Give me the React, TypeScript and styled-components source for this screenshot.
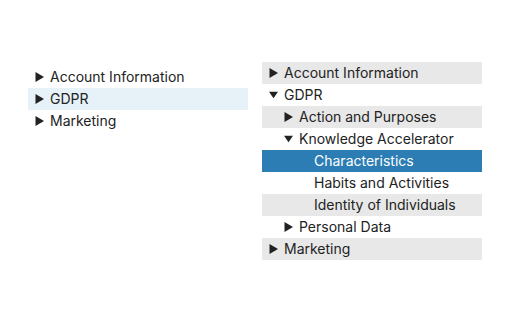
import React from 'react';
import styled, { createGlobalStyle } from 'styled-components';

const GlobalStyle = createGlobalStyle`
  body {
    margin: 0;
    background: #ffffff;
    font-family: Inter, "Noto Sans", sans-serif;
  }
`;

const Page = styled.div`
  display: flex;
  align-items: flex-start;
  gap: 14px;
  padding: 62px 0 0 28px;
  width: 520px;
  height: 320px;
  box-sizing: border-box;
`;

const Tree = styled.ul<{ $offset?: number }>`
  list-style: none;
  margin: ${(p) => p.$offset || 0}px 0 0;
  padding: 0;
  width: 220px;
`;

const rowBackground = (state?: string, stripe?: boolean) => {
  if (state === 'selected') return '#2b7db4';
  if (state === 'hover') return '#e6f1f8';
  return stripe ? '#e8e8e8' : 'transparent';
};

const Row = styled.li<{ $level: number; $state?: 'hover' | 'selected'; $stripe?: boolean }>`
  display: flex;
  align-items: center;
  height: 22px;
  padding-left: ${(p) => 7 + p.$level * 15}px;
  padding-bottom: 1px;
  box-sizing: border-box;
  font-size: 14px;
  color: ${(p) => (p.$state === 'selected' ? '#ffffff' : '#222222')};
  background: ${(p) => rowBackground(p.$state, p.$stripe)};
  white-space: nowrap;
`;

const Toggle = styled.span`
  display: inline-flex;
  align-items: center;
  justify-content: center;
  width: 9px;
  margin-right: 6px;
`;

const Spacer = styled.span`
  display: inline-block;
  width: 15px;
`;

type Node = {
  label: string;
  level: number;
  open?: boolean;
  leaf?: boolean;
  state?: 'hover' | 'selected';
};

const Arrow = ({ open }: { open?: boolean }) => (
  <Toggle>
    {open ? (
      <svg width="10" height="8" viewBox="0 0 10 8">
        <path d="M0 0.5 L10 0.5 L5 7.5 Z" fill="#222" />
      </svg>
    ) : (
      <svg width="9" height="10" viewBox="0 0 9 10">
        <path d="M0.5 0 L9 5 L0.5 10 Z" fill="#222" />
      </svg>
    )}
  </Toggle>
);

const left: Node[] = [
  { label: 'Account Information', level: 0 },
  { label: 'GDPR', level: 0, state: 'hover' },
  { label: 'Marketing', level: 0 },
];

const right: Node[] = [
  { label: 'Account Information', level: 0 },
  { label: 'GDPR', level: 0, open: true },
  { label: 'Action and Purposes', level: 1 },
  { label: 'Knowledge Accelerator', level: 1, open: true },
  { label: 'Characteristics', level: 2, leaf: true, state: 'selected' },
  { label: 'Habits and Activities', level: 2, leaf: true },
  { label: 'Identity of Individuals', level: 2, leaf: true },
  { label: 'Personal Data', level: 1 },
  { label: 'Marketing', level: 0 },
];

const renderRows = (nodes: Node[], striped = false) =>
  nodes.map((n, i) => (
    <Row key={n.label + n.level} $level={n.level} $state={n.state} $stripe={striped && i % 2 === 0}>
      {n.leaf ? <Spacer /> : <Arrow open={n.open} />}
      {n.label}
    </Row>
  ));

export default function App() {
  return (
    <>
      <GlobalStyle />
      <Page>
        <Tree $offset={4}>{renderRows(left)}</Tree>
        <Tree>{renderRows(right, true)}</Tree>
      </Page>
    </>
  );
}
